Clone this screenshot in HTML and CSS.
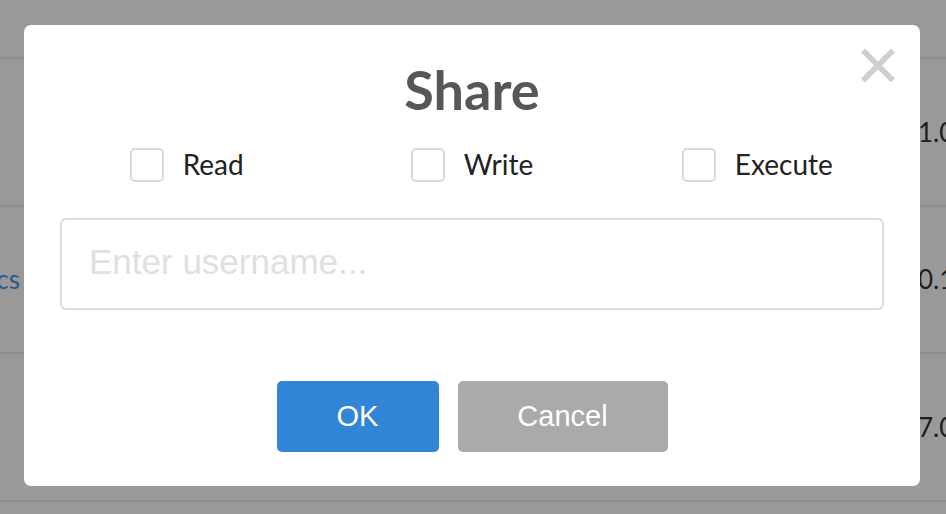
FILE: index.html
```html
<!DOCTYPE html>
<html>
<head>
<meta charset="utf-8">
<link rel="stylesheet" href="styles.css">
</head>
<body>
<div class="page">
  <div class="row row-first">
    <div class="cell-left"></div>
    <div class="cell-mid"></div>
    <div class="cell-right">1.0</div>
  </div>
  <div class="row">
    <div class="cell-left"><span class="link">cs</span></div>
    <div class="cell-mid"></div>
    <div class="cell-right">0.1</div>
  </div>
  <div class="row">
    <div class="cell-left"></div>
    <div class="cell-mid"></div>
    <div class="cell-right">7.0</div>
  </div>
  <div class="row row-last"></div>
</div>

<div class="overlay">
  <div class="modal">
    <svg class="close" width="34" height="35" viewBox="0 0 34 35" aria-label="Close">
      <path d="M2 2.5 L32 32.5 M32 2.5 L2 32.5" stroke="#cfcfcf" stroke-width="5.6" fill="none"/>
    </svg>
    <h2 class="title">Share</h2>
    <div class="perms">
      <label class="perm"><span class="box"></span><span class="perm-label">Read</span></label>
      <label class="perm"><span class="box"></span><span class="perm-label">Write</span></label>
      <label class="perm"><span class="box"></span><span class="perm-label">Execute</span></label>
    </div>
    <input class="username" type="text" placeholder="Enter username...">
    <div class="actions">
      <button class="btn btn-ok">OK</button>
      <button class="btn btn-cancel">Cancel</button>
    </div>
  </div>
</div>
</body>
</html>
```

FILE: styles.css
```css
html, body {
  margin: 0;
  padding: 0;
  overflow: hidden;
  width: 946px;
  height: 514px;
  background: #ffffff;
}

.page {
  padding-top: 57px;
  font-family: Lato, "Liberation Sans", sans-serif;
  font-size: 26px;
  color: #333333;
  height: 514px;
  box-sizing: border-box;
  overflow: hidden;
}

.row {
  height: 147.5px;
  box-sizing: border-box;
  border-top: 2px solid #ededed;
  display: flex;
  align-items: center;
}

.row-last {
  height: 14px;
}

.cell-left {
  width: 20px;
  overflow: hidden;
  display: flex;
  justify-content: flex-end;
  white-space: nowrap;
}

.link {
  color: #4a96e6;
}

.cell-mid {
  flex: 1;
}

.cell-right {
  width: 28px;
  white-space: nowrap;
}

.overlay {
  position: fixed;
  left: 0;
  top: 0;
  right: 0;
  bottom: 0;
  background: rgba(0, 0, 0, 0.4);
  padding: 25px 0 0 24px;
}

.modal {
  position: relative;
  width: 896px;
  box-sizing: border-box;
  background: #ffffff;
  border-radius: 7px;
  padding: 34px 20px 34px 20px;
}

.close {
  position: absolute;
  left: 837px;
  top: 23px;
  display: block;
}

.title {
  margin: 0;
  font-family: Lato, "Liberation Sans", sans-serif;
  font-weight: 700;
  font-size: 54px;
  line-height: 62px;
  text-align: center;
  color: #575757;
}

.perms {
  margin-top: 27px;
  display: flex;
  height: 33px;
}

.perm {
  flex: 1;
  display: flex;
  align-items: center;
  justify-content: center;
  gap: 19px;
}

.box {
  width: 34px;
  height: 34px;
  box-sizing: border-box;
  border: 2px solid #dadada;
  border-radius: 5px;
  background: #ffffff;
}

.perm-label {
  font-family: Lato, "Liberation Sans", sans-serif;
  font-size: 28px;
  line-height: 33px;
  color: #222222;
}

.username {
  display: block;
  margin: 37px 16px 0 16px;
  width: 824px;
  height: 92px;
  box-sizing: border-box;
  border: 2px solid #dcdcdc;
  border-radius: 6px;
  padding: 0 27px 4px 27px;
  font-family: "Liberation Sans", Arial, sans-serif;
  font-size: 35px;
  color: #444444;
  outline: none;
  background: #ffffff;
}

.username::placeholder {
  color: #e0e0e0;
}

.actions {
  margin-top: 71px;
  display: flex;
  justify-content: center;
  gap: 19px;
}

.btn {
  height: 71px;
  border: none;
  border-radius: 5px;
  padding: 0;
  font-family: "Liberation Sans", Arial, sans-serif;
  font-size: 29px;
  color: #ffffff;
  cursor: pointer;
}

.btn-ok {
  width: 162px;
  background: #3085d6;
}

.btn-cancel {
  width: 210px;
  background: #aaaaaa;
}
```
